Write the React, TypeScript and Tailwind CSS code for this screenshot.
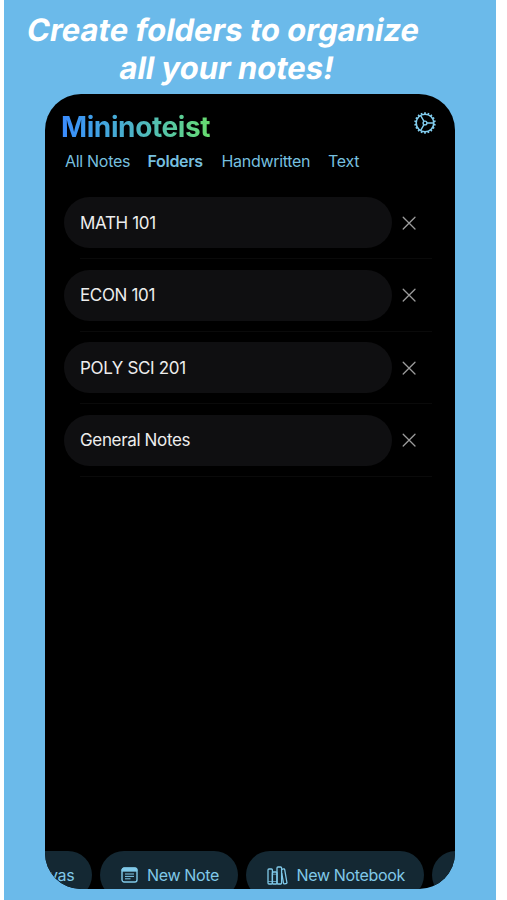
import React from "react";

const tabs = [
  { name: "All Notes", style: "w-[82.5px]" },
  { name: "Folders", style: "w-[74px] font-semibold" },
  { name: "Handwritten", style: "w-[106.5px]" },
  { name: "Text", style: "" },
];

const folders = ["MATH 101", "ECON 101", "POLY SCI 201", "General Notes"];

const teeth = Array.from({ length: 18 }, (_, i) => i * 20);

function GearIcon() {
  return (
    <svg width="24" height="24" viewBox="0 0 24 24" fill="none" stroke="currentColor" strokeWidth="1.6">
      <circle cx="12" cy="12" r="8.8" />
      {teeth.map((angle) => (
        <path key={angle} d="M12 3.2V1.3" strokeWidth="1.7" transform={`rotate(${angle} 12 12)`} />
      ))}
      <circle cx="12" cy="12" r="1.9" strokeWidth="1.4" />
      <path d="M14 12h6.5M11 10.3 7.7 4.6M11 13.7l-3.3 5.7" strokeWidth="1.4" />
    </svg>
  );
}

function CloseIcon() {
  return (
    <svg width="14" height="14" viewBox="0 0 14 14" stroke="currentColor" strokeWidth="1.3" strokeLinecap="round">
      <path d="m1.2 1.2 11.8 11.8M13 1.2 1.2 13" />
    </svg>
  );
}

function NoteIcon() {
  return (
    <svg width="17" height="16" viewBox="0 0 17 16" fill="none" stroke="currentColor">
      <rect x="1" y="1" width="15" height="14" rx="2.2" strokeWidth="1.4" />
      <path d="M1 3.2C1 1.8 1.8 1 3.2 1h10.6C15.2 1 16 1.8 16 3.2v1H1z" fill="currentColor" strokeWidth=".8" />
      <path d="M4 7h9M4 9.4h9M4 11.8h5.5" strokeWidth="1" />
    </svg>
  );
}

function BooksIcon() {
  return (
    <svg width="21" height="19" viewBox="0 0 21 19" fill="none" stroke="currentColor" strokeWidth="1.3" strokeLinejoin="round">
      <rect x="1" y="3" width="4.4" height="15" rx="1" />
      <rect x="5.4" y="6" width="4.6" height="12" rx="1" />
      <rect x="10" y="1" width="4.6" height="17" rx="1" />
      <path d="m14.7 3.3 2-.4c.5-.1.9.2 1 .7l2.2 12.9c.1.5-.2.9-.7 1l-1.7.3c-.5.1-.9-.2-1-.7L14.7 7" />
      <path d="M1 15.5h4.4M5.4 8.2H10M5.4 15.5H10" strokeWidth=".7" />
    </svg>
  );
}

export default function App(): React.ReactElement {
  return (
    <div className="h-[900px] w-[507px] overflow-hidden bg-white pl-1 font-['Inter',sans-serif]">
      <div className="h-full w-[492px] bg-[#6bbaea] pt-[11px]">
        {/* Skewed upright letters keep the double-storey "a" */}
        <h1 className="w-[439px] text-center text-[31px] leading-[38px] font-bold whitespace-nowrap text-white">
          <span className="block -skew-x-[10deg]">Create folders to organize</span>
          <span className="block -skew-x-[10deg] pl-[7px]">all your notes!</span>
        </h1>

        <main className="mt-[7px] ml-[41px] flex h-[795px] w-[410px] flex-col overflow-hidden rounded-[36px] bg-black">
          <header className="flex h-[56px] justify-between pt-[17px] pr-[18.5px] pl-4">
            <h2 className="h-9 bg-linear-to-r from-[#3b8bff] via-[#4db4c4] to-[#68dc6c] bg-clip-text text-[28px] leading-8 font-bold tracking-[-0.4px] text-transparent">
              Mininoteist
            </h2>
            <button aria-label="Settings" className="h-6 text-[#82cdee]">
              <GearIcon />
            </button>
          </header>

          <nav className="flex h-7 pl-5 text-[16px] leading-[23px] tracking-[-0.3px] whitespace-nowrap text-[#76bfdf]">
            {tabs.map((tab) => (
              <a key={tab.name} className={tab.style}>
                {tab.name}
              </a>
            ))}
          </nav>

          <ul className="mt-[7px] ml-[19px] w-[368px]">
            {folders.map((folder) => (
              <li key={folder} className="h-[72.5px] pt-3">
                <div className="flex items-center">
                  <div className="flex h-[51px] w-[328px] items-center rounded-full bg-[#0f0f11] pt-[2px] pl-4 text-[17px] tracking-[-0.35px] text-[#ededed]">
                    {folder}
                  </div>
                  <button aria-label="Delete folder" className="ml-[9.5px] text-[#9b9b9b]">
                    <CloseIcon />
                  </button>
                </div>
                <div className="mt-[10px] ml-4 h-px bg-[#0a0a0a]" />
              </li>
            ))}
          </ul>

          <footer className="mt-auto flex h-[38px] w-[480px] items-start gap-2 text-[16px] tracking-[-0.35px] whitespace-nowrap text-[#80c9e9]">
            <button className="h-[48px] w-[47px] shrink-0 rounded-r-full bg-[#142833] pl-1 text-left tracking-[-0.35px]">
              vas
            </button>
            <button className="flex h-[48px] w-[138px] shrink-0 items-center gap-[9px] rounded-full bg-[#142833] pl-[21px]">
              <NoteIcon />
              New Note
            </button>
            <button className="flex h-[48px] w-[178px] shrink-0 items-center gap-[9px] rounded-full bg-[#142833] pl-[20.5px]">
              <BooksIcon />
              New Notebook
            </button>
            <div className="h-[48px] w-[100px] shrink-0 rounded-full bg-[#142833]" />
          </footer>
        </main>
      </div>
    </div>
  );
}
